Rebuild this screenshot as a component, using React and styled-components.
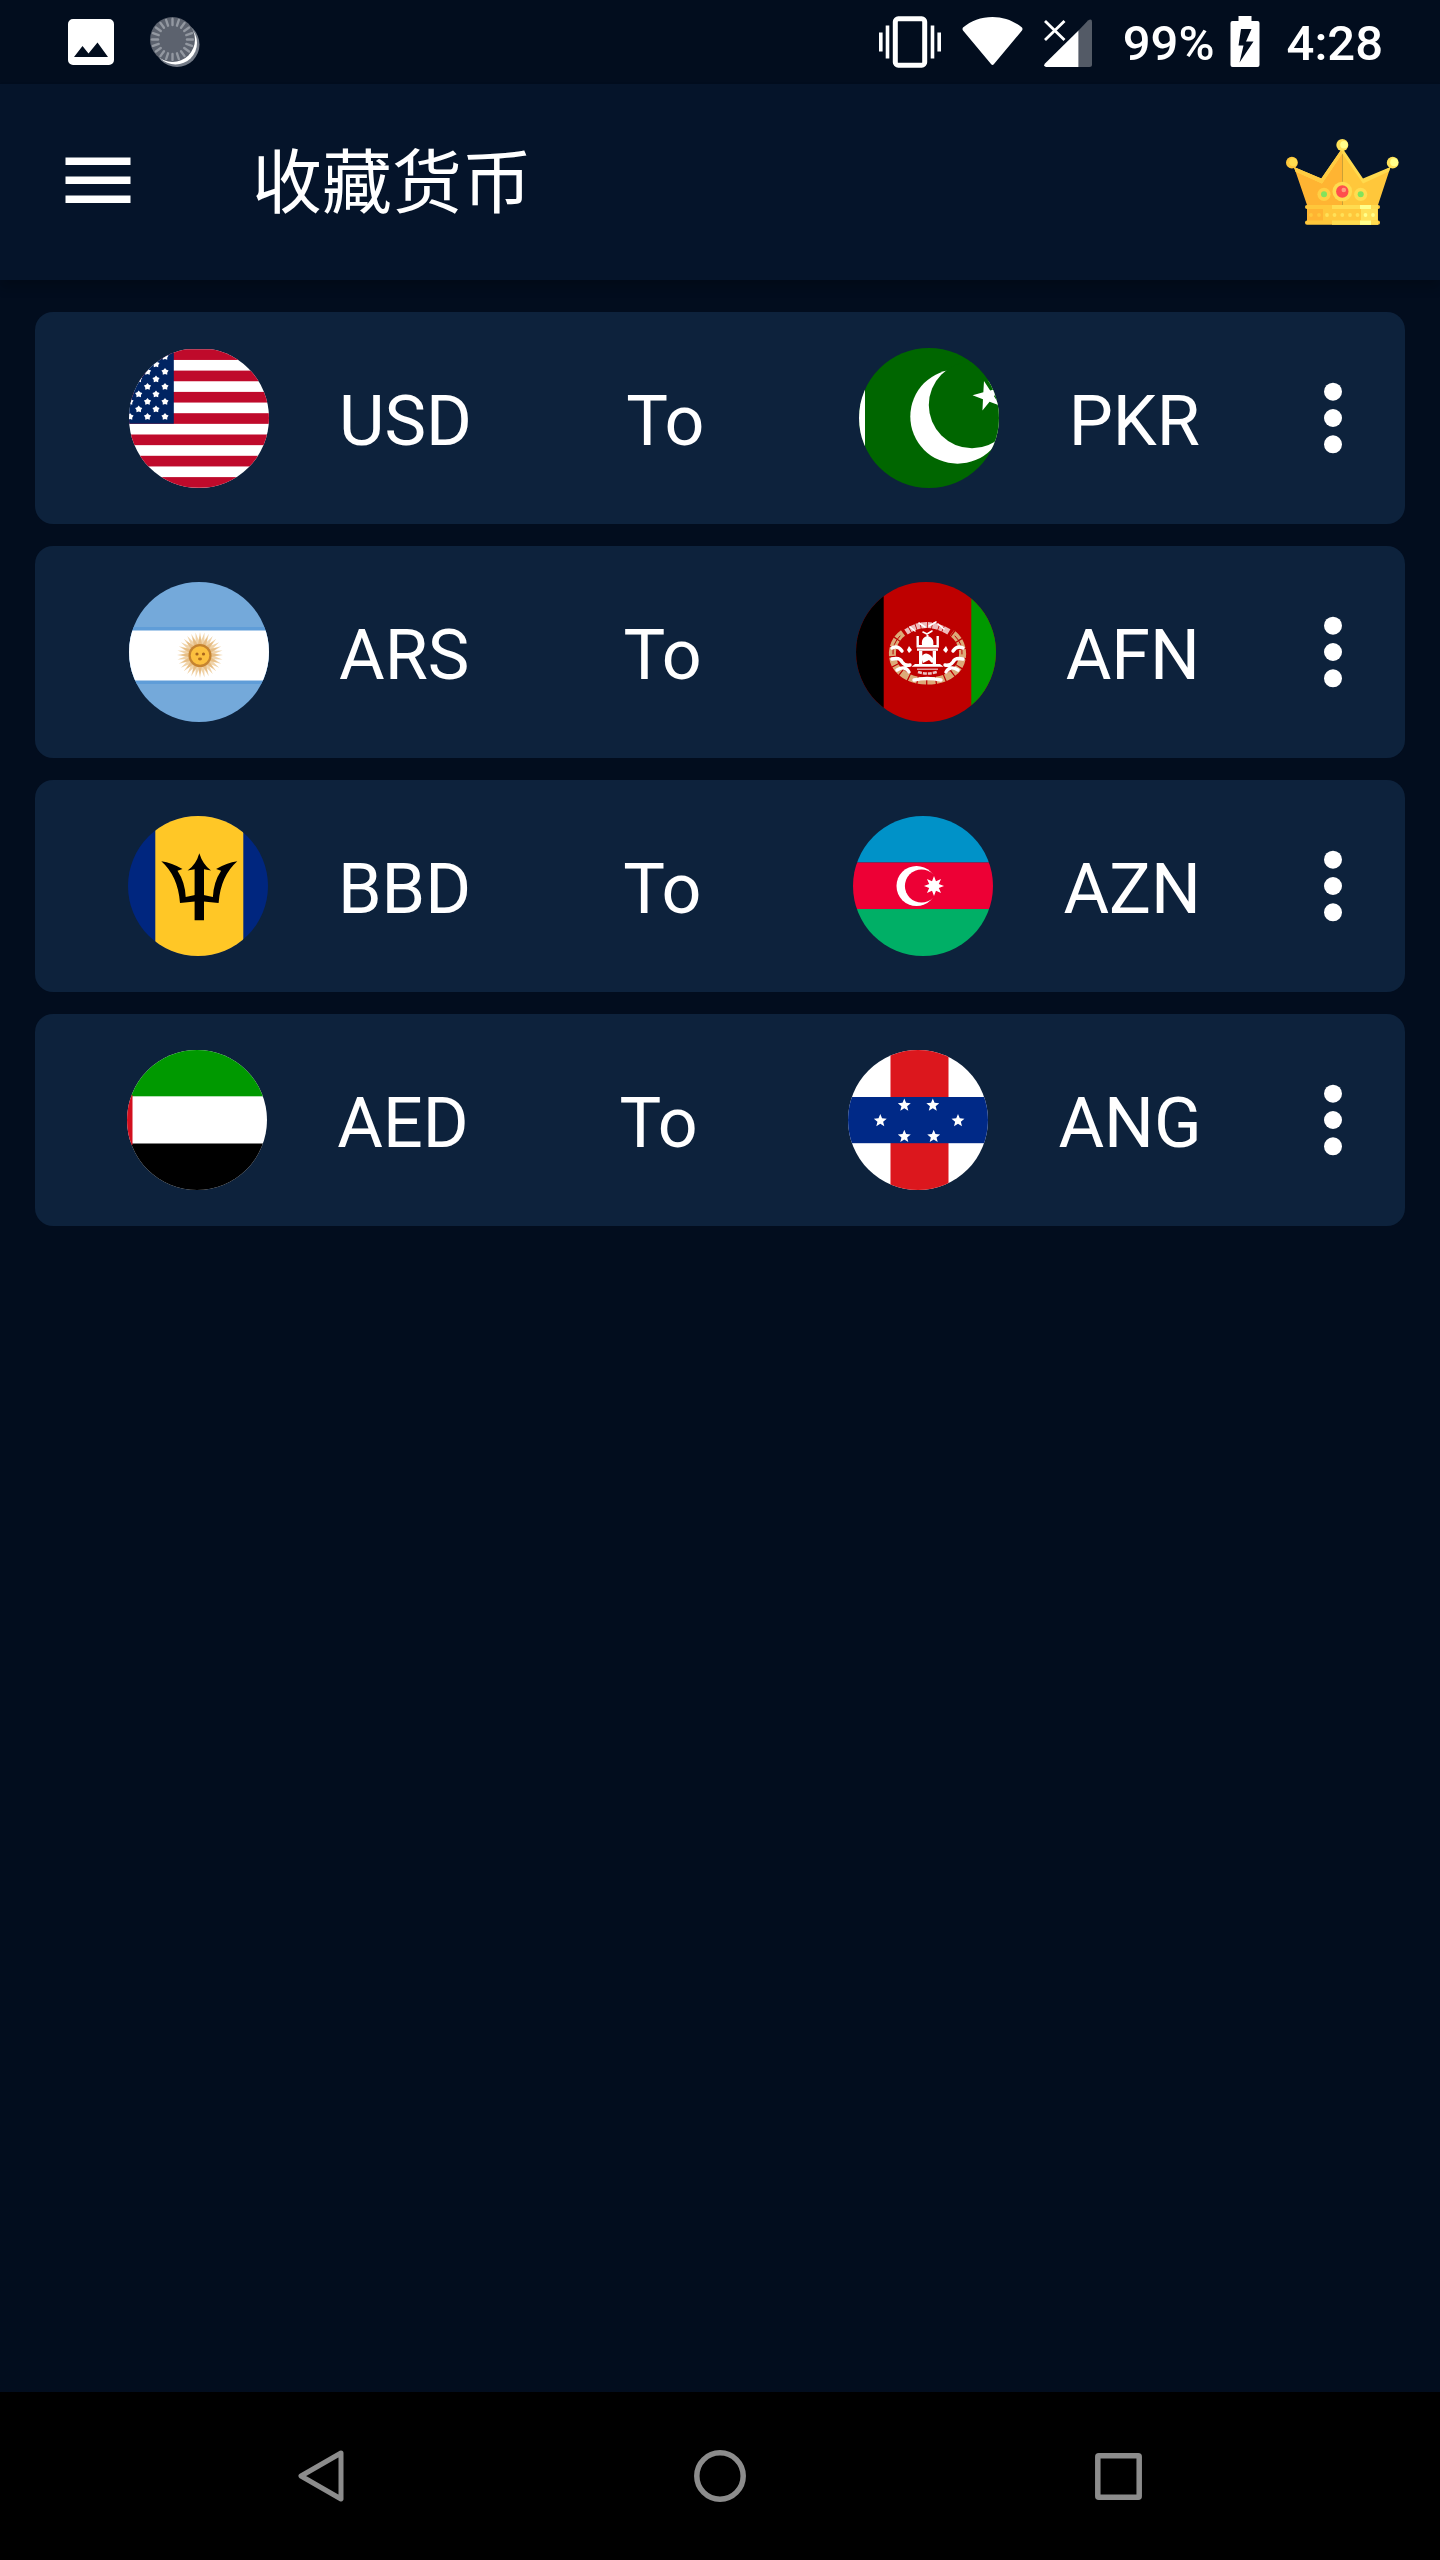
import React from "react";
import styled, { createGlobalStyle } from "styled-components";

const GlobalStyle = createGlobalStyle`
  *, *::before, *::after { box-sizing: border-box; }
  body {
    margin: 0;
    background: #020d1e;
    color: #fff;
    font-family: Roboto, "Noto Sans CJK SC", sans-serif;
  }
`;

const Screen = styled.div`
  display: flex;
  flex-direction: column;
  min-height: 100vh;
`;

const StatusBar = styled.div`
  display: flex;
  align-items: center;
  justify-content: space-between;
  height: 84px;
  padding: 0 57px 0 68px;
`;

const StatusGroup = styled.div`
  display: flex;
  align-items: center;
  gap: ${(p) => p.$gap}px;
`;

const StatusText = styled.span`
  font-size: 49px;
  line-height: 56px;
  font-weight: 500;
  padding: 4px 0 0 ${(p) => p.$space}px;
`;

const Header = styled.header`
  display: flex;
  align-items: center;
  height: 196px;
  padding: 0 41px 0 65px;
  background: #05142a;
  box-shadow: 0 8px 10px rgba(0, 0, 0, 0.2);
`;

const Title = styled.h1`
  flex: 1;
  margin: 0 0 0 121px;
  padding-top: 4px;
  font-size: 70px;
  line-height: 84px;
  font-weight: 400;
`;

const IconButton = styled.button`
  display: flex;
  align-items: center;
  justify-content: center;
  flex: none;
  width: ${(p) => (p.$width ? `${p.$width}px` : "auto")};
  height: ${(p) => (p.$height ? `${p.$height}px` : "auto")};
  padding: 0;
  border: 0;
  background: none;
  color: inherit;
  cursor: pointer;
`;

const List = styled.ul`
  flex: 1;
  display: flex;
  flex-direction: column;
  gap: 22px;
  margin: 0;
  padding: 32px 35px;
  list-style: none;
`;

const Card = styled.li`
  display: flex;
  align-items: center;
  height: 212px;
  padding: 0 17px;
  border-radius: 18px;
  background: #0d223c;
`;

const Pair = styled.div`
  flex: 1;
  display: flex;
  align-items: center;
  justify-content: space-around;
`;

const Currency = styled.div`
  display: flex;
  align-items: center;
  gap: 70px;
`;

const Label = styled.span`
  font-size: 70px;
  line-height: 84px;
  padding-top: 6px;
`;

const FlagCircle = styled.svg`
  display: block;
  width: 140px;
  height: 140px;
  border-radius: 50%;
`;

const NavBar = styled.nav`
  display: flex;
  justify-content: center;
  height: 168px;
  background: #000;
  color: #8c8c8c;
`;

const NavButton = styled(IconButton)`
  flex: 0 1 398px;
  height: 100%;
`;

function star(cx, cy, outer, inner, points, turn = -90) {
  const out = [];
  for (let i = 0; i < points * 2; i += 1) {
    const r = i % 2 ? inner : outer;
    const a = ((turn + (i * 180) / points) * Math.PI) / 180;
    out.push(`${(cx + r * Math.cos(a)).toFixed(2)},${(cy + r * Math.sin(a)).toFixed(2)}`);
  }
  return out.join(" ");
}

function UsFlag() {
  const stars = [];
  for (let k = 0; k < 5; k += 1) {
    [36, 18.5, 1].forEach((x) => stars.push([x, 8.7 + 15 * k]));
    if (k < 4) [27, 9.7].forEach((x) => stars.push([x, 16.2 + 15 * k]));
  }
  return (
    <>
      <rect y="1.3" width="140" height="140" fill="#fff" />
      {[0, 1, 2, 3, 4, 5, 6].map((i) => (
        <rect key={i} y={1.3 + i * 21.3} width="140" height="10.65" fill="#bf0a2b" />
      ))}
      <rect y="1.3" width="44.8" height="74.4" fill="#002462" />
      {stars.map(([x, y]) => (
        <polygon key={`${x}-${y}`} points={star(x, y, 3.8, 2.4, 5)} fill="#fff" />
      ))}
    </>
  );
}

function PakistanFlag() {
  return (
    <>
      <rect width="140" height="140" fill="#060" />
      <rect width="6" height="140" fill="#fff" />
      <circle cx="98.5" cy="68.5" r="47.2" fill="#fff" />
      <circle cx="113" cy="57" r="43.2" fill="#060" />
      <polygon points={star(129, 48, 15.5, 6, 5, 183)} fill="#fff" />
    </>
  );
}

function ArgentinaFlag() {
  return (
    <>
      <rect width="140" height="140" fill="#74a9da" />
      <rect y="45" width="140" height="57" fill="#5f9dd8" />
      <rect y="48.5" width="140" height="50" fill="#fff" />
      <polygon points={star(71, 73, 23, 15, 32)} fill="#f0d3a8" />
      <polygon points={star(71, 73, 19, 11, 16)} fill="#e6bd84" />
      <circle cx="71" cy="73.5" r="11.5" fill="#c5832f" />
      <circle cx="71" cy="73.5" r="9.3" fill="#fcc03f" />
      <circle cx="68" cy="72" r="1.6" fill="#a9651d" />
      <circle cx="74.5" cy="72" r="1.6" fill="#a9651d" />
      <ellipse cx="71" cy="77" rx="2" ry="1.4" fill="#b5701f" />
    </>
  );
}

function AfghanistanFlag() {
  return (
    <>
      <rect width="140" height="140" fill="#be0000" />
      <rect width="27.7" height="140" fill="#000" />
      <rect x="115.3" width="24.7" height="140" fill="#090" />
      <g fill="none" strokeLinecap="round">
        <path d="M47 51C33 61 33 82 46 91C53 97 62 99 71 99C81 99 90 97 97 91C110 82 110 61 96 51" stroke="#dcaa78" strokeWidth="7" strokeDasharray="8 1.2" strokeLinecap="butt" />
        <path d="M44 54Q36 62 37 72M99 54Q107 62 106 72" stroke="#be0000" strokeWidth="1" />
        <path d="M36 66q6-3 10 3M36 77q8-2 10 3q3 4 8 3M41 88q8-5 12 2M107 66q-6-3-10 3M107 77q-8-2-10 3q-3 4-8 3M102 88q-8-5-12 2M58 98q13-3 27 0" stroke="#fff" strokeWidth="3.4" />
        <path d="M50 50q20-14 43 0" stroke="#eebcbc" strokeWidth="6" strokeDasharray="4 .8 6 .8" strokeLinecap="butt" />
        <path d="M54 45l5 4M63 41l6 4M73 44l7-4M82 42l6 5M67 50l4 2l5-3" stroke="#fff" strokeWidth="1.6" />
        <path d="M62 90q9 3 19 0" stroke="#ecc4c4" strokeWidth="2.6" strokeDasharray="4 1" strokeLinecap="butt" />
      </g>
      <g fill="#fff">
        <path d="M60.5 54h2.4v9H66c-.6-5 1-8 4.5-8.6V53h2v1.4C76 55 78 58 77.300 63H80.500v-9h2.400v11.500H60.500z" />
        <path d="M61 66.500h21v2.200H61zM63 69h3.300v13H63zM76.700 69H80v13h-3.300zM59 82h25l3.500 2.700h-32z" />
        <path d="M65 75q4-6 9-2l5 5-3 3-3-3-6 3z" />
        <path d="M53 64l3 4-3 3-2-3zM90 64l2 4-2 3-3-3z" />
        <path d="M61 86.500h21v1.500H61z" opacity=".6" />
      </g>
    </>
  );
}

function BarbadosFlag() {
  const prong = "M33.3 45.3Q44 47 54.5 53L49.5 54.800Q57 66 57.700 81L67 79V85.500L52 87Q50 60 33.300 45.300Z";
  return (
    <>
      <rect width="140" height="140" fill="#00267f" />
      <rect x="27.3" width="88" height="140" fill="#ffc726" />
      <path d={prong} />
      <path d={prong} transform="matrix(-1 0 0 1 142.600 0)" />
      <path d="M71.300 37.300Q75 49 83 54.500L76 53.200V104.300H66.600V53.200L59.600 54.500Q68 49 71.300 37.300Z" />
    </>
  );
}

function AzerbaijanFlag() {
  return (
    <>
      <rect width="140" height="46.5" fill="#0092c8" />
      <rect y="46.5" width="140" height="46.5" fill="#ed0035" />
      <rect y="93" width="140" height="47" fill="#00af66" />
      <circle cx="63.5" cy="70" r="20" fill="#fff" />
      <circle cx="68.5" cy="70" r="16.6" fill="#ed0035" />
      <polygon points={star(81, 70, 10, 5.2, 8)} fill="#fff" />
    </>
  );
}

function EmiratesFlag() {
  return (
    <>
      <rect width="140" height="140" fill="#fff" />
      <rect width="140" height="46.3" fill="#090" />
      <rect y="93.5" width="140" height="46.5" fill="#000" />
      <rect y="45" width="5.5" height="50" fill="#d20f1e" />
    </>
  );
}

function AntillesFlag() {
  const spots = [[56.3, 55.3], [84.8, 55.3], [32.3, 70.8], [110, 70.8], [56.3, 86.5], [85.7, 86.5]];
  return (
    <>
      <rect width="140" height="140" fill="#fff" />
      <rect x="42.5" width="58" height="140" fill="#dc171d" />
      <rect y="47" width="140" height="46.2" fill="#002987" />
      {spots.map(([x, y]) => (
        <polygon key={`${x}-${y}`} points={star(x, y, 6.8, 3, 5)} fill="#fff" />
      ))}
    </>
  );
}

const flags = {
  USD: UsFlag,
  PKR: PakistanFlag,
  ARS: ArgentinaFlag,
  AFN: AfghanistanFlag,
  BBD: BarbadosFlag,
  AZN: AzerbaijanFlag,
  AED: EmiratesFlag,
  ANG: AntillesFlag,
};

const pairs = [
  ["USD", "PKR"],
  ["ARS", "AFN"],
  ["BBD", "AZN"],
  ["AED", "ANG"],
];

function CurrencyItem({ code }) {
  const Flag = flags[code];
  return (
    <Currency>
      <FlagCircle viewBox="0 0 140 140" aria-hidden="true">
        <Flag />
      </FlagCircle>
      <Label>{code}</Label>
    </Currency>
  );
}

function PictureIcon() {
  return (
    <svg width="46" height="46" viewBox="0 0 46 46" aria-hidden="true">
      <path fill="#fff" fillRule="evenodd" d="M5 0H41A5 5 0 0 1 46 5V41A5 5 0 0 1 41 46H5A5 5 0 0 1 0 41V5A5 5 0 0 1 5 0ZM14.500 27L6 38H40L29.500 23.500L20.500 34.500Z" />
    </svg>
  );
}

function SpinnerIcon() {
  return (
    <svg width="50" height="50" viewBox="0 0 50 50" aria-hidden="true">
      <circle cx="27" cy="27.5" r="22.5" fill="#747b87" />
      <circle cx="25.5" cy="26" r="21.5" fill="#fff" />
      <circle cx="22.5" cy="22.5" r="22.5" fill="#5c626e" />
      {Array.from({ length: 20 }, (_, i) => (
        <path key={i} d="M22.500 2V8" stroke="#9398a1" strokeWidth="2.4" strokeLinecap="round" transform={`rotate(${i * 18} 22.5 22.5)`} />
      ))}
    </svg>
  );
}

function VibrateIcon() {
  return (
    <svg width="62" height="52" viewBox="0 0 62 52" fill="none" stroke="#fff" aria-hidden="true">
      <rect x="16.3" y="2.8" width="29.4" height="46.4" rx="3" strokeWidth="5" />
      <path d="M8.500 9.500V42.500M53.500 9.500V42.500M1.800 16.500V35.500M60.200 16.500V35.500" strokeWidth="3.6" />
    </svg>
  );
}

function WifiIcon() {
  return (
    <svg width="61" height="52" viewBox="0 0 61 52" aria-hidden="true">
      <path d="M30.500 1C42 1 52 5 60 11.500Q61 13 60 14.500L32 48Q30.500 50 29 48L1 14.500Q0 13 1 11.500C9 5 19 1 30.500 1Z" fill="#fff" />
    </svg>
  );
}

function SignalIcon() {
  return (
    <svg width="48" height="52" viewBox="0 0 48 52" aria-hidden="true">
      <path d="M34.500 14.500L44 4.500Q48 2 48 6V48.500Q48 51 45.500 51H34.500Z" fill="#535a66" />
      <path d="M34.500 14.500V51H2Q-1 50 1 47.500Z" fill="#fff" />
      <path d="M1 5L20.500 24M20.500 5L1 24" stroke="#fff" strokeWidth="2.8" />
    </svg>
  );
}

function BatteryIcon() {
  return (
    <svg width="30" height="52" viewBox="0 0 30 52" aria-hidden="true">
      <path fill="#fff" fillRule="evenodd" d="M8.500 0H21.500V5H27.500Q29.500 5 29.500 7V49Q29.500 51 27.500 51H2.500Q.5 51 .5 49V7Q.5 5 2.500 5H8.500ZM11 13L8.500 29.500H13.500L9.500 46.500L23.500 25.500H16L21.500 13Z" />
    </svg>
  );
}

function MenuIcon() {
  return (
    <svg width="66" height="52" viewBox="0 0 66 52" fill="#fff" aria-hidden="true">
      <path d="M.5 1.600H65.500V9H.5ZM.5 20.600H65.500V28H.5ZM.5 39.600H65.500V47H.5Z" />
    </svg>
  );
}

function MoreIcon() {
  return (
    <svg width="18" height="72" viewBox="0 0 18 72" fill="#fff" aria-hidden="true">
      <circle cx="9" cy="9.7" r="9" />
      <circle cx="9" cy="36" r="9" />
      <circle cx="9" cy="62.3" r="9" />
    </svg>
  );
}

function CrownIcon() {
  return (
    <svg width="113" height="86" viewBox="0 0 113 86" aria-hidden="true">
      <path d="M8 28L35 42L56.300 10V66H21Z" fill="#ffb432" />
      <path d="M104.500 28L77 42L56.300 10V66H92Z" fill="#ffc73b" />
      <path d="M8 28L35.300 39.500L56.300 9L77 39.500L104.500 28L103 32.500L77 44.500L56.300 14.500L36 44.500L9.500 32.500Z" fill="#ffda4e" />
      <path d="M8 28L35.300 39.500L56.300 9V14.500L36 44.500L9.500 32.500Z" fill="#ffcb42" />
      <circle cx="5.9" cy="23.7" r="5.9" fill="#ffc73b" />
      <circle cx="7.3" cy="23.3" r="4" fill="#ffdd50" />
      <circle cx="56.3" cy="6" r="6" fill="#ffe158" />
      <circle cx="58" cy="5.7" r="3.8" fill="#ffff8c" />
      <circle cx="106.7" cy="23.7" r="5.9" fill="#ffe158" />
      <circle cx="108.2" cy="23.3" r="4" fill="#ffff8c" />
      <circle cx="56.3" cy="52.5" r="9.8" fill="#ffdc50" />
      <circle cx="56.3" cy="52.5" r="6.2" fill="#ff4f4d" />
      <circle cx="57.8" cy="51" r="2.3" fill="#ff9b7c" />
      <circle cx="38" cy="55.3" r="6.6" fill="#ffcf43" />
      <circle cx="38" cy="55.3" r="3" fill="#82e35c" />
      <circle cx="74.7" cy="55.3" r="6.6" fill="#ffdc50" />
      <circle cx="74.7" cy="55.3" r="3" fill="#82e35c" />
      <rect x="21" y="69" width="71" height="14" fill="#ffc73b" />
      <rect x="21" y="69" width="16" height="14" fill="#ffb432" />
      <rect x="75" y="69" width="16.5" height="14" fill="#ffe158" />
      <rect x="19" y="66" width="75" height="4" rx="2" fill="#ffc73b" />
      <rect x="46" y="66" width="46" height="4" fill="#ffdc50" />
      <rect x="74" y="66" width="11" height="4" fill="#ffff8c" />
      <rect x="19" y="81.5" width="75" height="4.3" rx="2" fill="#ffc73b" />
      <rect x="46" y="81.5" width="46" height="4.3" fill="#ffdc50" />
      <rect x="74" y="81.5" width="11" height="4.3" fill="#ffff8c" />
      {[25, 33, 41, 48.5, 56.3, 64, 71.5, 79.5, 87].map((x, i) => (
        <circle key={x} cx={x} cy="76" r="1.9" fill={i < 2 ? "#ffc73b" : i < 7 ? "#ffe158" : "#ffff8c"} />
      ))}
    </svg>
  );
}

function BackIcon() {
  return (
    <svg width="50" height="54" viewBox="0 0 50 54" fill="none" stroke="currentColor" strokeWidth="5" strokeLinejoin="round" aria-hidden="true">
      <path d="M44 4L4 27L44 50Z" />
    </svg>
  );
}

function HomeIcon() {
  return (
    <svg width="52" height="52" viewBox="0 0 52 52" fill="none" stroke="currentColor" strokeWidth="5.5" aria-hidden="true">
      <circle cx="26" cy="26" r="23.2" />
    </svg>
  );
}

function RecentIcon() {
  return (
    <svg width="47" height="47" viewBox="0 0 47 47" fill="none" stroke="currentColor" strokeWidth="5.5" aria-hidden="true">
      <rect x="2.8" y="2.8" width="41.4" height="41.4" rx="1" />
    </svg>
  );
}

export default function App() {
  return (
    <Screen>
      <GlobalStyle />
      <StatusBar>
        <StatusGroup $gap={36}>
          <PictureIcon />
          <SpinnerIcon />
        </StatusGroup>
        <StatusGroup $gap={21}>
          <VibrateIcon />
          <WifiIcon />
          <SignalIcon />
          <StatusGroup $gap={15}>
            <StatusText $space={10}>99%</StatusText>
            <BatteryIcon />
          </StatusGroup>
          <StatusText $space={6}>4:28</StatusText>
        </StatusGroup>
      </StatusBar>
      <Header>
        <IconButton aria-label="菜单">
          <MenuIcon />
        </IconButton>
        <Title>收藏货币</Title>
        <IconButton aria-label="高级版">
          <CrownIcon />
        </IconButton>
      </Header>
      <List>
        {pairs.map(([from, to]) => (
          <Card key={from}>
            <Pair>
              <CurrencyItem code={from} />
              <Label>To</Label>
              <CurrencyItem code={to} />
            </Pair>
            <IconButton aria-label="更多" $width={111} $height={140}>
              <MoreIcon />
            </IconButton>
          </Card>
        ))}
      </List>
      <NavBar>
        <NavButton aria-label="返回">
          <BackIcon />
        </NavButton>
        <NavButton aria-label="主屏幕">
          <HomeIcon />
        </NavButton>
        <NavButton aria-label="最近任务">
          <RecentIcon />
        </NavButton>
      </NavBar>
    </Screen>
  );
}
